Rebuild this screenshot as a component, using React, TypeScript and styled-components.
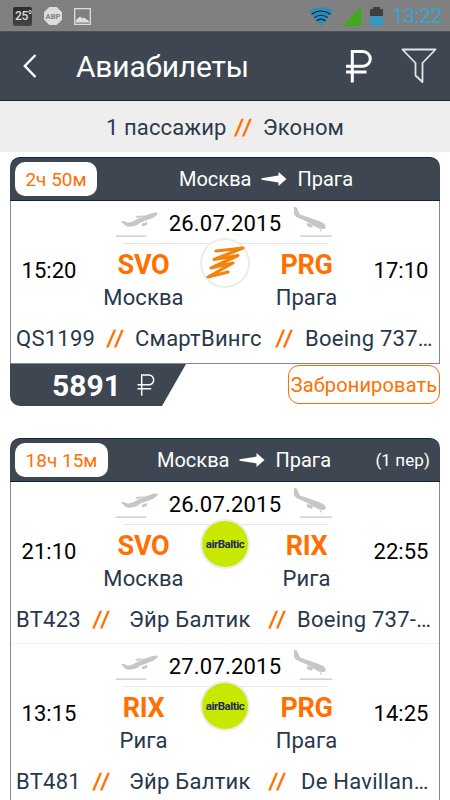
import React from 'react';
import styled, {createGlobalStyle} from 'styled-components';

const GlobalStyle = createGlobalStyle`
  * {
    box-sizing: border-box;
  }
  body {
    margin: 0;
    background: #fff;
    font-family: Roboto, "Noto Sans", sans-serif;
    overflow: hidden;
  }
`;

const Screen = styled.div`
  width: 450px;
  height: 800px;
  overflow: hidden;
  background: #fff;
`;

const StatusBar = styled.div`
  display: flex;
  align-items: center;
  height: 31px;
  padding: 1px 8px 0 13px;
  background: #808080;
`;

const StatusIcons = styled.div<{ $gap: number }>`
  display: flex;
  align-items: center;
  gap: ${({$gap}) => $gap}px;
`;

const Temperature = styled.div`
  width: 19px;
  height: 19px;
  border-radius: 2px;
  background: linear-gradient(#2c2c2c, #464646);
  color: #ddd;
  font-size: 12px;
  font-weight: 500;
  line-height: 19px;
  padding-left: 2px;
  letter-spacing: -0.4px;
  white-space: nowrap;
`;

const Clock = styled.span`
  margin-left: 9px;
  color: #33a6d6;
  font-size: 21px;
  line-height: 30px;
  letter-spacing: -0.5px;
`;

const Header = styled.header`
  display: flex;
  align-items: center;
  height: 70px;
  padding: 0 13px 0 23px;
  background: #3e4751;
  border-top: 1px solid #4a525b;
  border-bottom: 1px solid #11293c;
`;

const Title = styled.h1`
  margin: 0 auto 0 39px;
  padding-top: 2px;
  color: #fff;
  font-size: 30px;
  font-weight: 400;
  line-height: 68px;
  letter-spacing: -0.2px;
`;

const HeaderIcons = styled.div`
  display: flex;
  align-items: center;
  gap: 28px;
`;

const Summary = styled.div`
  display: flex;
  justify-content: center;
  align-items: center;
  gap: 9px;
  height: 51px;
  padding-top: 2px;
  background: #eee;
  color: #2c3b4b;
  font-size: 22px;
  letter-spacing: 0.1px;
`;

const Slashes = styled.span`
  color: #ff7000;
  font-weight: 700;
  font-size: 23px;
  letter-spacing: 2px;
  transform: skewX(-5deg);
`;

const List = styled.main`
  display: flex;
  flex-direction: column;
  gap: 32px;
  padding: 5px 10px 0;
`;

const CardHeader = styled.div`
  display: flex;
  align-items: center;
  height: 44px;
  padding: 0 10px 0 5px;
  background: #3e4751;
  border: 1px solid #13253a;
  border-width: 1px 0;
  border-radius: 10px 10px 0 0;
  color: #fff;
`;

const Duration = styled.span<{ $width: number }>`
  width: ${({$width}) => $width}px;
  height: 34px;
  border-radius: 10px;
  background: #fff;
  color: #ff7000;
  font-size: 19px;
  line-height: 36px;
  text-align: center;
  white-space: nowrap;
`;

const Direction = styled.div<{ $offset: number }>`
  display: flex;
  align-items: center;
  gap: 10px;
  margin-left: ${({$offset}) => $offset}px;
  font-size: 20px;
`;

const Transfers = styled.span`
  margin-left: auto;
  font-size: 17px;
  letter-spacing: 0.1px;
`;

const CardBody = styled.div`
  border: 1px solid #85888c;
  border-top: 0;
`;

const Leg = styled.section`
  height: 162px;

  &:not(:last-child) {
    border-bottom: 1px dashed #ececec;
  }
`;

const DateRow = styled.div`
  display: flex;
  justify-content: center;
  width: 205px;
  height: 43px;
  margin: 0 auto;
  border-bottom: 1px solid #e6e6e6;
`;

const FlightDate = styled.span`
  width: 134px;
  flex: none;
  color: #000;
  font-size: 22px;
  line-height: 45px;
  text-align: center;
  letter-spacing: 0.2px;
`;

const PlaneIcon = styled.svg`
  flex: none;
  margin-top: 5px;
`;

const MainRow = styled.div`
  display: grid;
  grid-template-columns: 76px 113px 50px 113px 76px;
  height: 75px;
`;

const Time = styled.span`
  color: #000;
  font-size: 22px;
  line-height: 54px;
  text-align: center;
`;

const Place = styled.div`
  display: flex;
  flex-direction: column;
  align-items: center;
  padding-top: 4px;
`;

const Code = styled.strong`
  color: #ff7000;
  font-size: 27px;
  font-weight: 700;
  line-height: 34px;
  letter-spacing: -0.3px;
`;

const City = styled.span`
  color: #27384a;
  font-size: 22px;
  line-height: 32px;
  letter-spacing: 0.1px;
`;

const Airline = styled.div<{ $color: string }>`
  display: flex;
  align-items: center;
  justify-content: center;
  width: 50px;
  height: 50px;
  margin-top: -6px;
  border: 2px solid #ececec;
  border-radius: 50%;
  background: ${({$color}) => $color};
  color: #1d2c55;
  font-size: 11.5px;
  font-weight: 700;
  letter-spacing: -0.5px;
`;

const Details = styled.div<{ $columns: string }>`
  display: grid;
  grid-template-columns: ${({$columns}) => $columns};
  height: 43px;
  padding-left: 5px;
  color: #27384a;
  font-size: 22px;
  line-height: 40px;
  letter-spacing: 0.25px;
  white-space: nowrap;
`;

const Footer = styled.div`
  display: flex;
  justify-content: space-between;
  height: 42px;
`;

const Price = styled.div`
  display: flex;
  align-items: center;
  gap: 16px;
  width: 176px;
  height: 42px;
  padding: 0 0 0 42px;
  border-radius: 0 0 0 10px;
  background: #3e4751;
  clip-path: polygon(0 0, 100% 0, 152px 100%, 0 100%);
  color: #fff;
  font-size: 30px;
  font-weight: 700;
`;

const BookButton = styled.button`
  width: 152px;
  height: 39px;
  margin-top: 1px;
  padding: 0;
  border: 1px solid #ff6a0a;
  border-radius: 11px;
  background: #fff;
  color: #ff7000;
  font-family: inherit;
  font-size: 20px;
  letter-spacing: 0.15px;
  white-space: nowrap;
`;

type LegData = {
    date: string;
    from: string[];
    to: string[];
    airline: 'smart' | 'baltic';
    details: string[];
    columns: string;
};

const Ruble = ({width, height, stroke}: { width: number; height: number; stroke: number }) => (
    <svg width={width} height={height} viewBox="0 0 27 33" fill="none" stroke="#fff" strokeWidth={stroke}>
        <path d="M6.3 32.5V1.6H17a7.2 7.2 0 0 1 0 14.6H0M0 22h20.5"/>
    </svg>
);

const Arrow = () => (
    <svg width="26" height="16" viewBox="0 0 26 16" fill="#fff">
        <path d="M0.500 7.200L17.500 4.600V1L25.500 8l-8 7v-3.600L0.500 8.800z"/>
    </svg>
);

const TakeOff = () => (
    <PlaneIcon width="43" height="33" viewBox="0 0 43 33" fill="#c6c6c6">
        <path d="M6 15h3l4 1.800 4.500-1.200 6-3 8.500-3.600L36 7.400c3-1.100 6.200-1.400 6.700-.2.400 1.300-3.200 4-6.500 5.400L25 16.800l-3 2.200c-4 1.700-8.200 2.100-10.700 1.200C9.500 19.200 7.500 17.200 6 15z"/>
        <path d="M22 12l-1.500-1.400 2-.8 10-.4z"/>
        <path d="M26.500 18l5-1.900 1 1-.7 2-4.300 1.400z"/>
        <path d="M0.700 29.500h30.500v1.300H0.700z"/>
    </PlaneIcon>
);

const Landing = () => (
    <PlaneIcon width="43" height="33" viewBox="0 0 43 33" fill="#c6c6c6">
        <path d="M2 .7L4.700 1.600 8 8.600 21.300 13l8.400 3.300c2.600 1.200 4.300 3.200 4 5.200-.8 1.800-4 1.900-7.400.8L14.700 15.500 5.500 11.500C3 10.300 2 8.500 2 6.500z"/>
        <path d="M14.800 16.700l5.700 2 .3 1.800-1.600 1.200-4-1.600z"/>
        <circle cx="28.700" cy="24.500" r=".9"/>
        <path d="M8.300 29.500h31.500v1.300H8.300z"/>
    </PlaneIcon>
);

const Scribble = () => (
    <svg width="46" height="46" viewBox="0 0 46 46" fill="none" stroke="#f5820a" strokeLinecap="round" strokeLinejoin="round">
        <path d="M14 11L41 8 12 19.500l24-4L9 28l22-5L6 37l20-5" strokeWidth="3.100"/>
    </svg>
);

const LegView = ({leg}: { leg: LegData }) => (
    <Leg>
        <DateRow>
            <TakeOff/>
            <FlightDate>{leg.date}</FlightDate>
            <Landing/>
        </DateRow>
        <MainRow>
            <Time>{leg.from[0]}</Time>
            <Place>
                <Code>{leg.from[1]}</Code>
                <City>{leg.from[2]}</City>
            </Place>
            {leg.airline === 'smart'
                ? <Airline $color="#fff"><Scribble/></Airline>
                : <Airline $color="#c8e800">airBaltic</Airline>}
            <Place>
                <Code>{leg.to[1]}</Code>
                <City>{leg.to[2]}</City>
            </Place>
            <Time>{leg.to[0]}</Time>
        </MainRow>
        <Details $columns={leg.columns}>
            <span>{leg.details[0]}</span>
            <Slashes>//</Slashes>
            <span>{leg.details[1]}</span>
            <Slashes>//</Slashes>
            <span>{leg.details[2]}</span>
        </Details>
    </Leg>
);

const direct: LegData[] = [
    {
        date: '26.07.2015',
        from: ['15:20', 'SVO', 'Москва'],
        to: ['17:10', 'PRG', 'Прага'],
        airline: 'smart',
        details: ['QS1199', 'СмартВингс', 'Boeing 737…'],
        columns: '91px 28px 141px 29px 1fr',
    },
];

const transfer: LegData[] = [
    {
        date: '26.07.2015',
        from: ['21:10', 'SVO', 'Москва'],
        to: ['22:55', 'RIX', 'Рига'],
        airline: 'baltic',
        details: ['BT423', 'Эйр Балтик', 'Boeing 737-…'],
        columns: '77px 36px 140px 28px 1fr',
    },
    {
        date: '27.07.2015',
        from: ['13:15', 'RIX', 'Рига'],
        to: ['14:25', 'PRG', 'Прага'],
        airline: 'baltic',
        details: ['BT481', 'Эйр Балтик', 'De Havillan…'],
        columns: '77px 36px 140px 32px 1fr',
    },
];

const App: React.FC = () => {
    return (
        <Screen>
            <GlobalStyle/>
            <StatusBar>
                <StatusIcons $gap={12}>
                    <Temperature>25°</Temperature>
                    <svg width="18" height="18" viewBox="0 0 18 18">
                        <path d="M5.3 0h7.4L18 5.3v7.4L12.7 18H5.3L0 12.7V5.3z" fill="#ddd"/>
                        <text x="9" y="11.6" textAnchor="middle" fontSize="7.5" fontWeight="900" fill="#888">ABP</text>
                    </svg>
                    <svg width="17" height="17" viewBox="0 0 17 17">
                        <path d="M.7.7h15.6v15.6H.7z" fill="none" stroke="#ddd" strokeWidth="1.3"/>
                        <path d="M2 14.5V12l4-3.5 2.5 2L10 9.5l5 3.5v1.5z" fill="#ddd"/>
                    </svg>
                </StatusIcons>
                <StatusIcons $gap={9} style={{marginLeft: 'auto'}}>
                    <svg width="24" height="19" viewBox="0 0 24 19">
                        <path d="M0 4Q12-4 24 4L12 19z" fill="#2b8db8"/>
                        <path d="M2.5 7.3q9.500-6.500 19 0M5 10.600q7-4.800 14 0M7.500 13.800q4.500-3.300 9 0" fill="none" stroke="#10222c" strokeWidth="1.1"/>
                    </svg>
                    <svg width="19" height="19" viewBox="0 0 19 19" fill="#31b404">
                        <path d="M0 19l4.500-4.500V19zM5.300 13.700L8.300 10.700V19h-3zM9.100 9.900l3-3V19h-3zM12.900 6.100l3-3V19h-3zM16.500 2.500L19 0v19h-2.500z"/>
                    </svg>
                    <svg width="13" height="19" viewBox="0 0 13 19">
                        <path d="M0 2h3V0h7v2h3v7H0z" fill="#404040"/>
                        <path d="M0 9h13v10H0z" fill="#3797bf"/>
                    </svg>
                </StatusIcons>
                <Clock>13:22</Clock>
            </StatusBar>
            <Header>
                <svg width="14" height="24" viewBox="0 0 14 24" fill="none" stroke="#fff" strokeWidth="2.400">
                    <path d="M12.500 1L1.800 12l10.700 11"/>
                </svg>
                <Title>Авиабилеты</Title>
                <HeaderIcons>
                    <Ruble width={27} height={33} stroke={3}/>
                    <svg width="36" height="36" viewBox="0 0 36 36" fill="none" stroke="#e4e4e4" strokeWidth="1.800" strokeLinejoin="round">
                        <path d="M1.500 1.500h33l-13 13.500v19l-7-6.500V15z"/>
                    </svg>
                </HeaderIcons>
            </Header>
            <Summary>
                <span>1 пассажир</span>
                <Slashes>//</Slashes>
                <span>Эконом</span>
            </Summary>
            <List>
                <article>
                    <CardHeader>
                        <Duration $width={82}>2ч 50м</Duration>
                        <Direction $offset={82}>
                            <span>Москва</span>
                            <Arrow/>
                            <span>Прага</span>
                        </Direction>
                    </CardHeader>
                    <CardBody>
                        {direct.map((leg) => <LegView key={leg.details[0]} leg={leg}/>)}
                    </CardBody>
                    <Footer>
                        <Price>
                            5891
                            <Ruble width={19} height={22} stroke={2.2}/>
                        </Price>
                        <BookButton type="button">Забронировать</BookButton>
                    </Footer>
                </article>
                <article>
                    <CardHeader>
                        <Duration $width={93}>18ч 15м</Duration>
                        <Direction $offset={49}>
                            <span>Москва</span>
                            <Arrow/>
                            <span>Прага</span>
                        </Direction>
                        <Transfers>(1 пер)</Transfers>
                    </CardHeader>
                    <CardBody>
                        {transfer.map((leg) => <LegView key={leg.details[0]} leg={leg}/>)}
                    </CardBody>
                </article>
            </List>
        </Screen>
    );
};

export default App;
